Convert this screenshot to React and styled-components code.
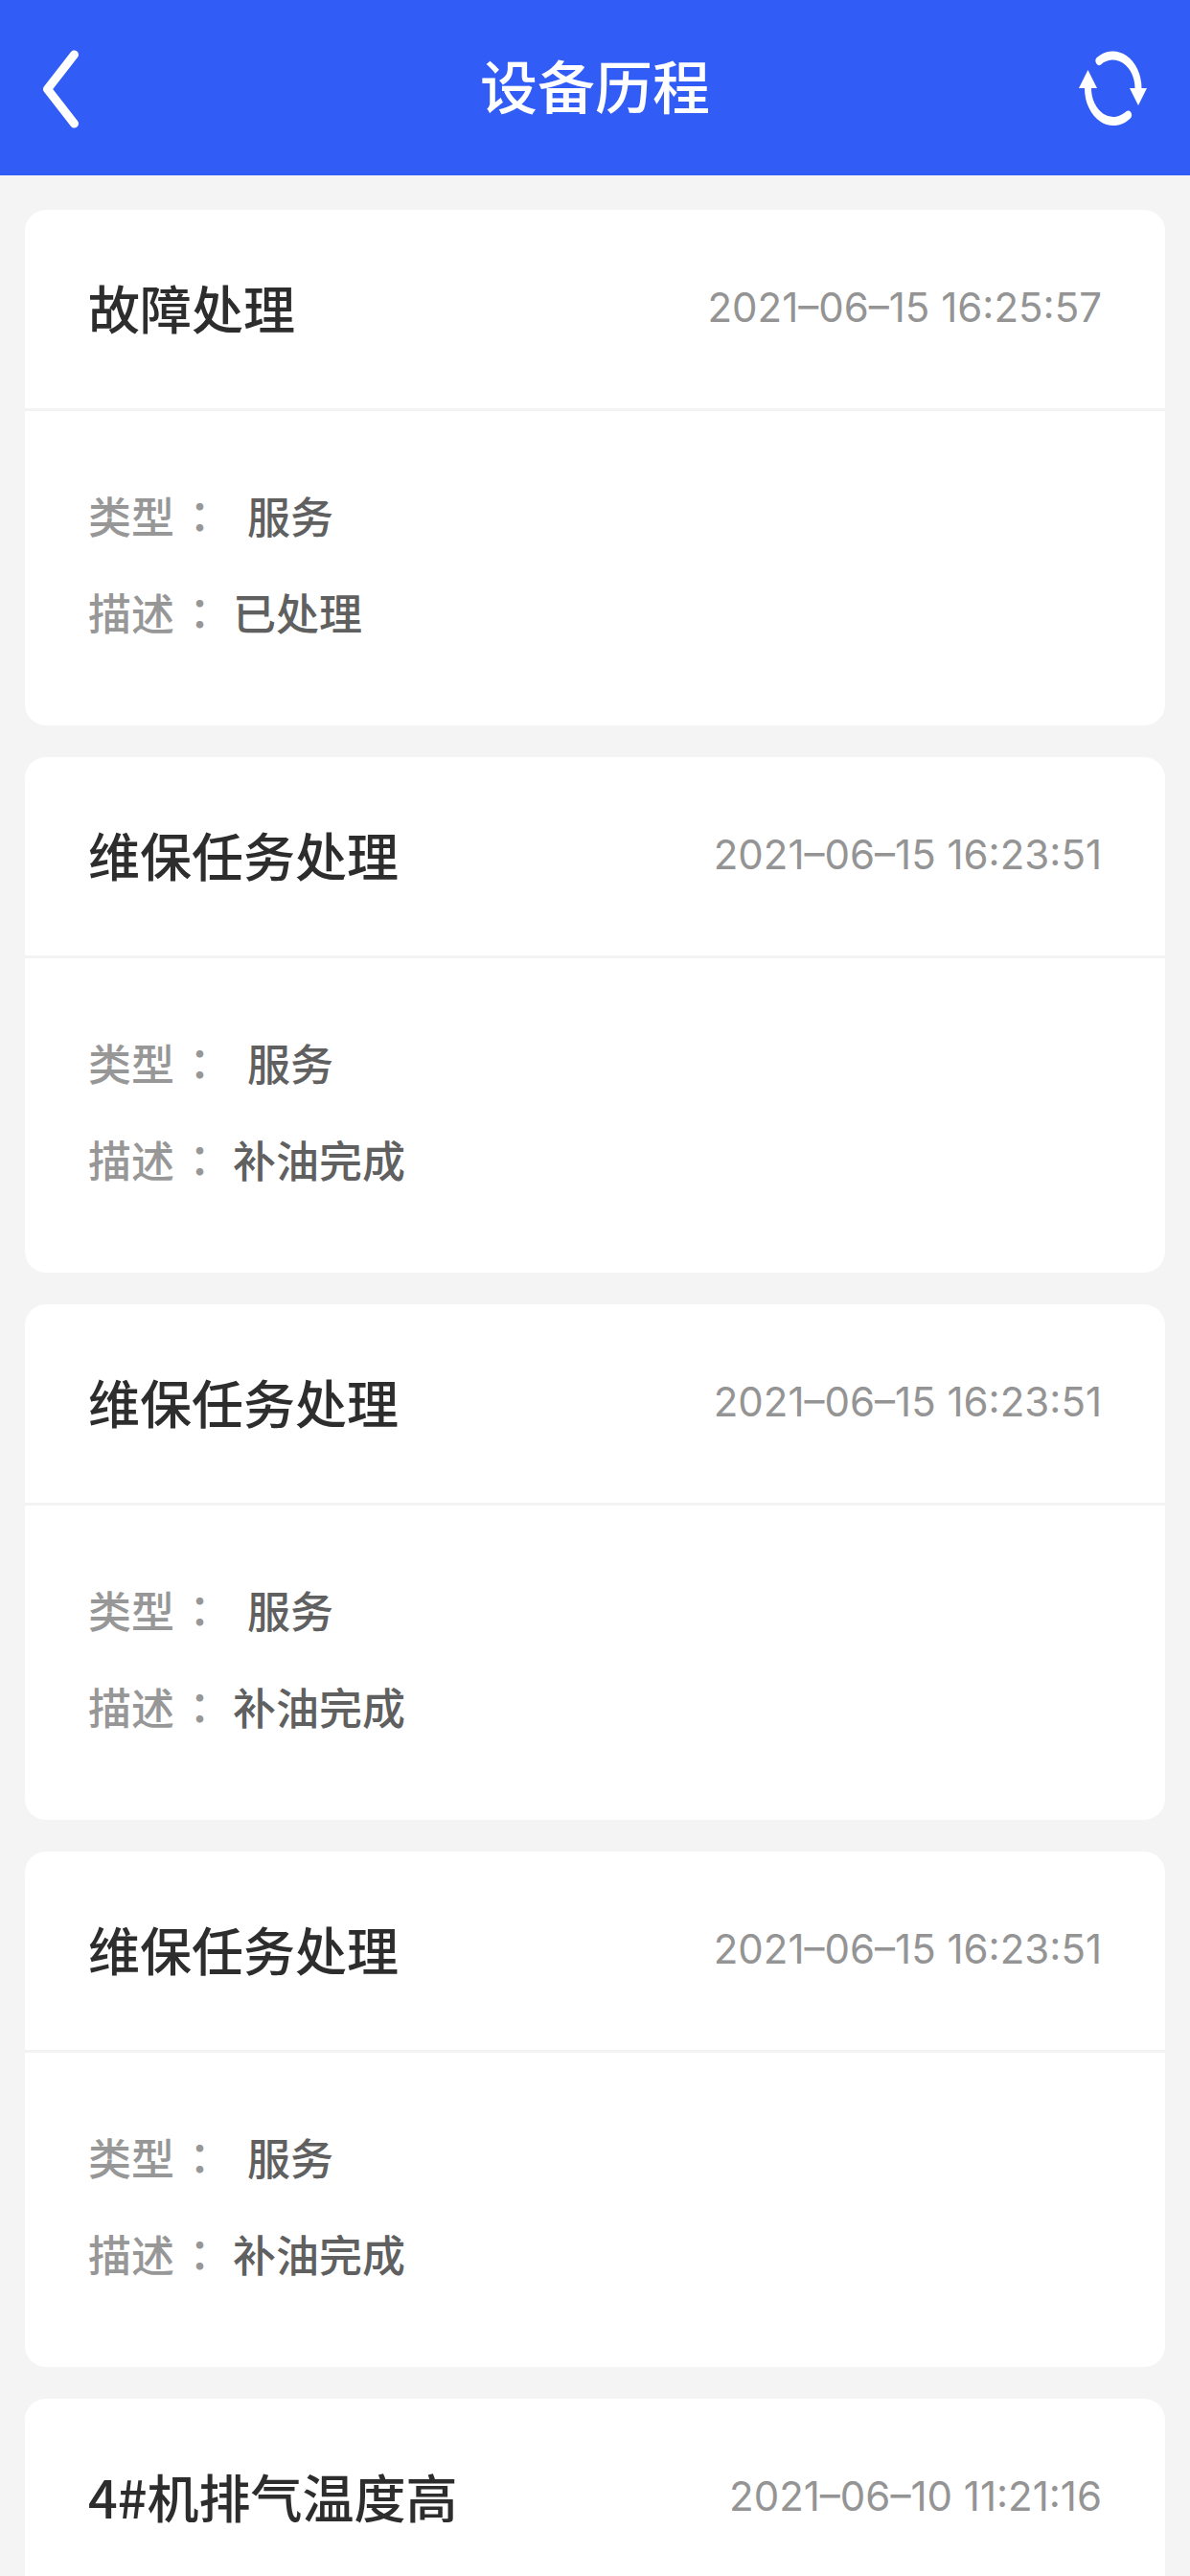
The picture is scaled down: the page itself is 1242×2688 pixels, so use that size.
import React from 'react';
import styled, { createGlobalStyle } from 'styled-components';

const GlobalStyle = createGlobalStyle`
  * {
    box-sizing: border-box;
  }
  body {
    margin: 0;
    background: #f4f4f4;
    font-family: 'Noto Sans CJK SC', sans-serif;
  }
`;

const Screen = styled.div`
  display: flex;
  flex-direction: column;
  height: 100vh;
`;

const TopBar = styled.header`
  display: grid;
  flex: none;
  grid-template-columns: 1fr auto 1fr;
  align-items: center;
  height: 183px;
  padding: 0 40px;
  background: #315cf5;
  color: #fff;
`;

const PageTitle = styled.h1`
  margin: 0;
  padding-bottom: 8px;
  font-size: 60px;
  line-height: 80px;
  font-weight: 500;
`;

const IconButton = styled.button`
  display: flex;
  justify-self: ${({ $end }) => ($end ? 'end' : 'start')};
  padding: 0;
  border: 0;
  background: none;
  color: inherit;
  cursor: pointer;
`;

const List = styled.main`
  display: flex;
  flex: 1;
  flex-direction: column;
  gap: 33px;
  min-height: 0;
  padding: 36px 26px;
  overflow-y: auto;
  scrollbar-width: none;
`;

const Card = styled.article`
  flex: none;
  border-radius: 22px;
  background: #fff;
`;

const CardHeader = styled.div`
  display: flex;
  align-items: center;
  justify-content: space-between;
  height: 210px;
  padding: 0 66px 4px;
  border-bottom: 3px solid #f3f3f3;
`;

const CardTitle = styled.h2`
  margin: 0;
  color: #2d2d2d;
  font-size: 54px;
  line-height: 80px;
  font-weight: 500;
`;

const Time = styled.time`
  color: #949494;
  font-family: Inter, sans-serif;
  font-size: 42px;
  line-height: 80px;
`;

const Details = styled.dl`
  margin: 0;
  padding: 58px 66px 68px;
`;

const Row = styled.div`
  display: flex;
  font-size: 45px;
  line-height: 101px;
  font-weight: 500;
`;

const Label = styled.dt`
  color: #979797;
`;

// the TC face centres the full-width colon in its cell
const Colon = styled.span`
  margin: 0 12px 0 4px;
  font-family: 'Noto Sans CJK TC', sans-serif;
`;

const Value = styled.dd`
  margin: 0;
  padding-left: ${({ $indent }) => ($indent ? 15 : 0)}px;
  color: #606060;
`;

const BackIcon = () => (
  <svg width="48" height="90" viewBox="0 0 48 90" fill="none" aria-hidden="true">
    <path
      d="M37.5 10 9.5 46 37.5 82"
      stroke="currentColor"
      strokeWidth="9"
      strokeLinecap="round"
      strokeLinejoin="round"
    />
  </svg>
);

const RefreshIcon = () => (
  <svg width="80" height="82" viewBox="0 0 80 82" fill="none" aria-hidden="true">
    <g transform="scale(1 1.3)">
      <path
        d="M25 9.7A26.5 26.5 0 0 1 66 31.5M55.5 53.1A26.5 26.5 0 0 1 13.5 31.5"
        stroke="currentColor"
        strokeWidth="7"
        strokeLinecap="round"
      />
      <path d="M57 31.5H75L66 45.4ZM4 31.5H23L13.5 17Z" fill="currentColor" />
    </g>
  </svg>
);

const records = [
  { id: 1, title: '故障处理', time: '2021–06–15 16:25:57', type: '服务', desc: '已处理' },
  { id: 2, title: '维保任务处理', time: '2021–06–15 16:23:51', type: '服务', desc: '补油完成' },
  { id: 3, title: '维保任务处理', time: '2021–06–15 16:23:51', type: '服务', desc: '补油完成' },
  { id: 4, title: '维保任务处理', time: '2021–06–15 16:23:51', type: '服务', desc: '补油完成' },
  { id: 5, title: '4#机排气温度高', time: '2021–06–10 11:21:16' },
];

const RecordCard = ({ title, time, type, desc }) => (
  <Card>
    <CardHeader>
      <CardTitle>{title}</CardTitle>
      <Time>{time}</Time>
    </CardHeader>
    <Details>
      {type && (
        <Row>
          <Label>
            类型<Colon lang="zh-TW">：</Colon>
          </Label>
          <Value $indent>{type}</Value>
        </Row>
      )}
      {desc && (
        <Row>
          <Label>
            描述<Colon lang="zh-TW">：</Colon>
          </Label>
          <Value>{desc}</Value>
        </Row>
      )}
    </Details>
  </Card>
);

const App = () => (
  <>
    <GlobalStyle />
    <Screen>
      <TopBar>
        <IconButton type="button" aria-label="返回">
          <BackIcon />
        </IconButton>
        <PageTitle>设备历程</PageTitle>
        <IconButton type="button" aria-label="刷新" $end>
          <RefreshIcon />
        </IconButton>
      </TopBar>
      <List>
        {records.map(({ id, ...record }) => (
          <RecordCard key={id} {...record} />
        ))}
      </List>
    </Screen>
  </>
);

export default App;
